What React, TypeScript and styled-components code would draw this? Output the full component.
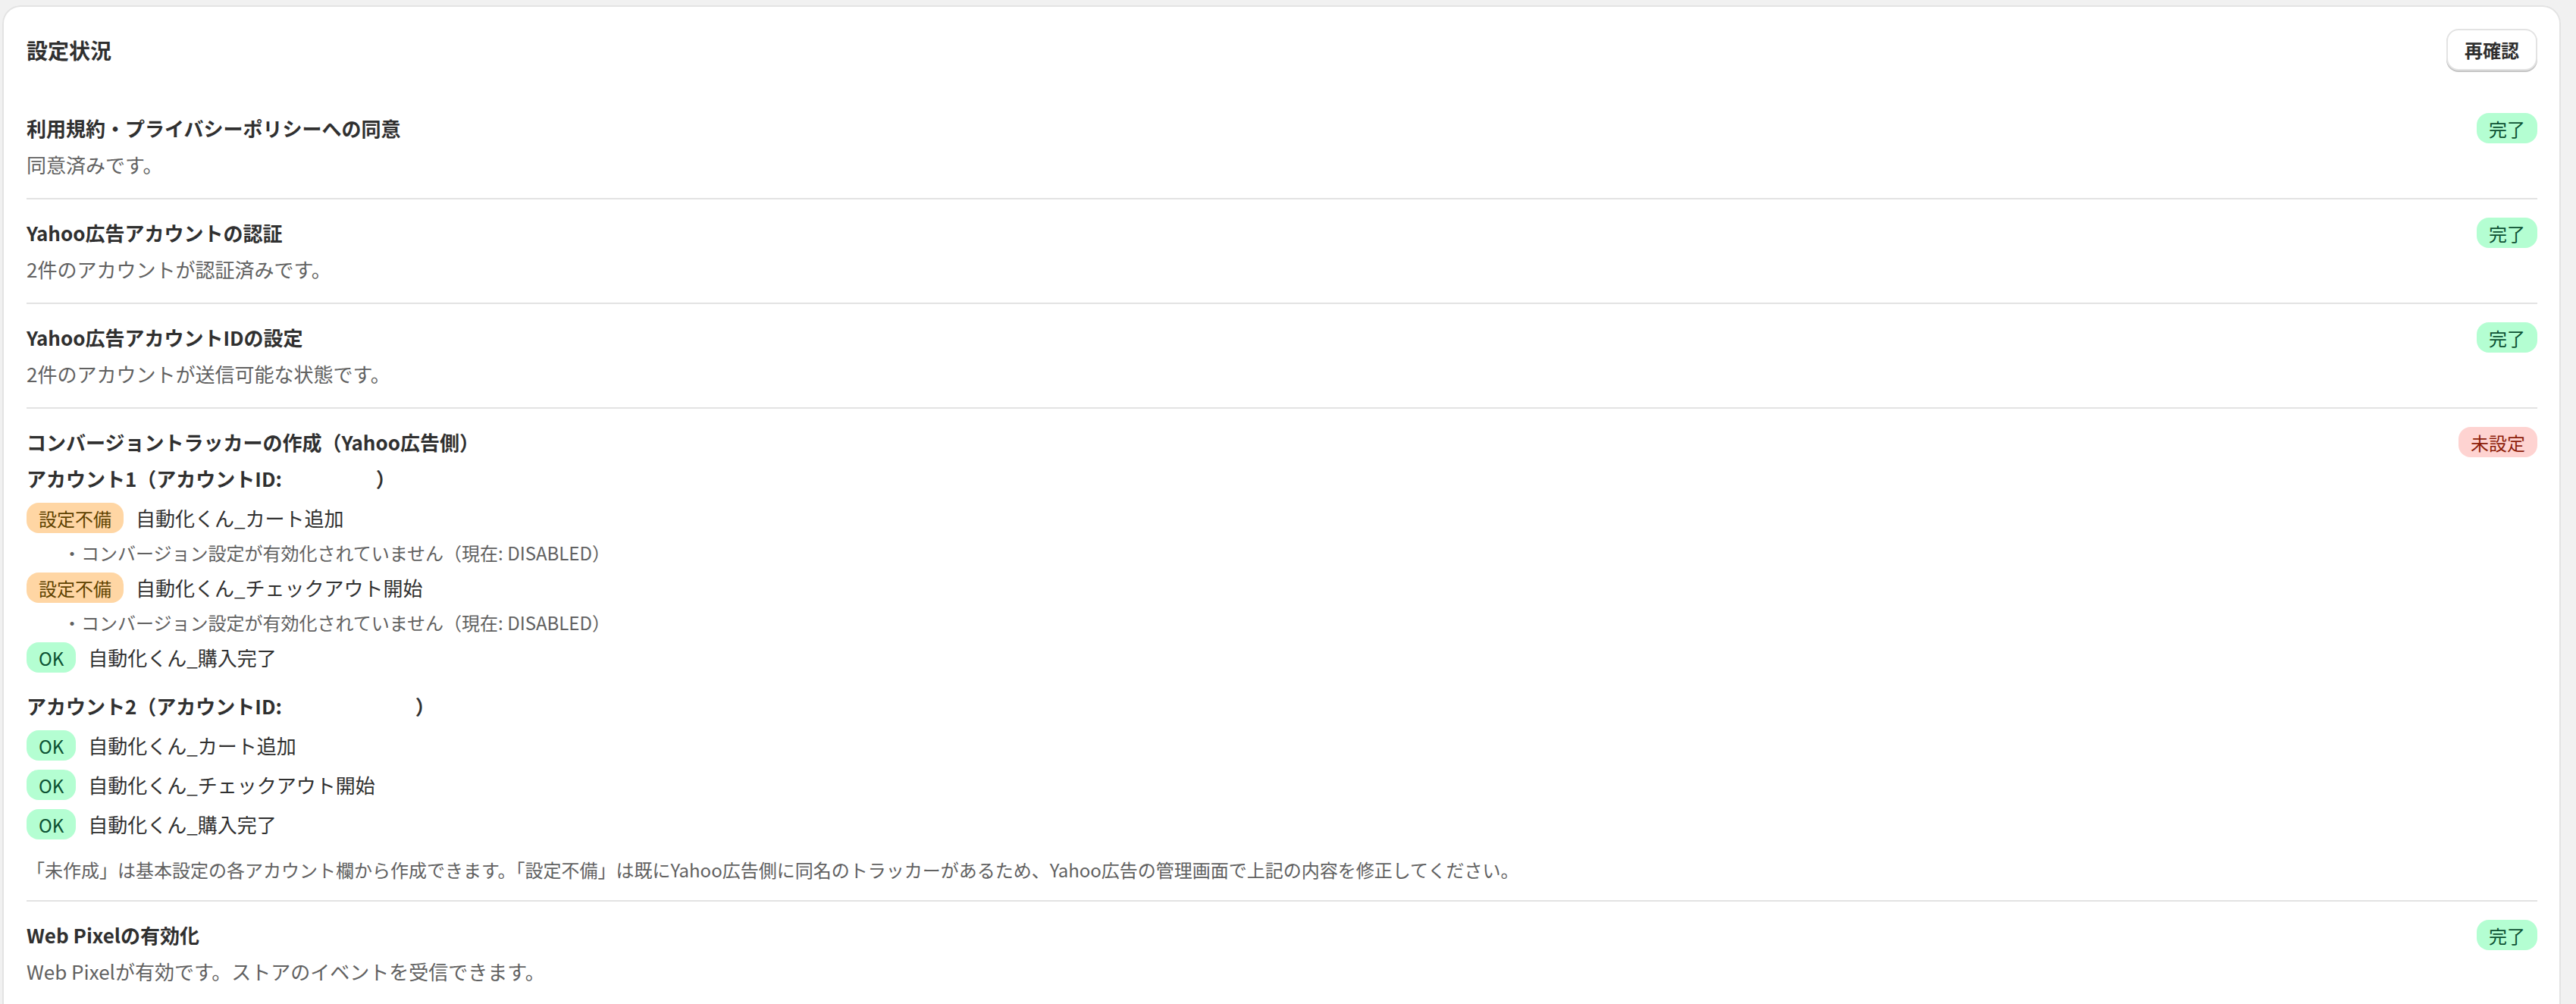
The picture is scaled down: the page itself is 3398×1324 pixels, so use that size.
import { Fragment } from "react";
import styled, { createGlobalStyle } from "styled-components";

const GlobalStyle = createGlobalStyle`
  html, body {
    margin: 0;
    padding: 0;
    background: #f1f1f1;
  }
  body {
    font-family: "Noto Sans CJK JP", "Noto Sans", sans-serif;
    color: #303030;
  }
`;

type Tone = "success" | "critical" | "warning";

const toneColors: Record<Tone, { bg: string; fg: string }> = {
  success: { bg: "#b4fed2", fg: "#0c5132" },
  critical: { bg: "#fed3d1", fg: "#8e1f0b" },
  warning: { bg: "#ffd6a4", fg: "#5e4200" },
};

const Page = styled.div`
  padding: 7px 20px 0 3px;
`;

const Card = styled.div`
  background: #ffffff;
  border-radius: 24px;
  box-shadow: inset 0 0 0 2px #e3e3e3, inset 0 -2px 0 0 #d4d4d4;
  padding: 31px 31px 32px 32px;
`;

const Header = styled.div`
  display: flex;
  justify-content: space-between;
  align-items: center;
  margin-bottom: 32px;
`;

const Title = styled.h2`
  margin: 0;
  font-size: 28px;
  line-height: 40px;
  font-weight: 700;
`;

const Button = styled.button`
  height: 55px;
  padding: 0 22px;
  border: 2px solid #e3e3e3;
  border-radius: 16px;
  background: #ffffff;
  box-shadow: 0 2px 0 0 #c4c4c4;
  font-family: inherit;
  font-size: 24px;
  font-weight: 700;
  color: #303030;
  cursor: pointer;
`;

const Section = styled.section`
  display: flex;
  flex-direction: column;
  gap: 8px;
  padding: 24px 0;
  border-bottom: 2px solid #e3e3e3;

  &:last-child {
    border-bottom: none;
  }
`;

const TopRow = styled.div`
  display: flex;
  justify-content: space-between;
  align-items: center;
`;

const Heading = styled.h3`
  margin: 0;
  font-size: 26px;
  line-height: 40px;
  font-weight: 700;
  color: #303030;
`;

const Description = styled.p`
  margin: 0;
  font-size: 26px;
  line-height: 40px;
  color: #616161;
`;

const Badge = styled.span<{ $tone: Tone }>`
  display: inline-flex;
  align-items: center;
  height: 40px;
  padding: 0 16px;
  border-radius: 16px;
  font-size: 24px;
  white-space: nowrap;
  background: ${({ $tone }) => toneColors[$tone].bg};
  color: ${({ $tone }) => toneColors[$tone].fg};
`;

const AccountList = styled.div`
  display: flex;
  flex-direction: column;
  gap: 24px;
`;

const Account = styled.div`
  display: flex;
  flex-direction: column;
  gap: 12px;
`;

// blank where the account ID is hidden in the screenshot
const Redacted = styled.span<{ $w: number }>`
  display: inline-block;
  width: ${({ $w }) => $w}px;
`;

const TrackerRow = styled.div`
  display: flex;
  align-items: center;
  gap: 16px;
`;

const TrackerName = styled.span`
  font-size: 26px;
  line-height: 40px;
  color: #303030;
`;

const Issue = styled.div`
  padding-left: 48px;
  font-size: 24px;
  line-height: 28px;
  color: #616161;
`;

const Footnote = styled.p`
  margin: 16px 0 0;
  font-size: 24px;
  line-height: 32px;
  color: #616161;
`;

type Tracker = { status: "ok" | "bad"; name: string; issue?: string };

const disabledIssue = "・コンバージョン設定が有効化されていません（現在: DISABLED）";

const accounts: { no: number; idWidth: number; trackers: Tracker[] }[] = [
  {
    no: 1,
    idWidth: 118,
    trackers: [
      { status: "bad", name: "自動化くん_カート追加", issue: disabledIssue },
      { status: "bad", name: "自動化くん_チェックアウト開始", issue: disabledIssue },
      { status: "ok", name: "自動化くん_購入完了" },
    ],
  },
  {
    no: 2,
    idWidth: 170,
    trackers: [
      { status: "ok", name: "自動化くん_カート追加" },
      { status: "ok", name: "自動化くん_チェックアウト開始" },
      { status: "ok", name: "自動化くん_購入完了" },
    ],
  },
];

function SimpleSection({ title, text }: { title: string; text: string }) {
  return (
    <Section>
      <TopRow>
        <Heading>{title}</Heading>
        <Badge $tone="success">完了</Badge>
      </TopRow>
      <Description>{text}</Description>
    </Section>
  );
}

export default function App() {
  return (
    <>
      <GlobalStyle />
      <Page>
        <Card>
          <Header>
            <Title>設定状況</Title>
            <Button>再確認</Button>
          </Header>

          <SimpleSection
            title="利用規約・プライバシーポリシーへの同意"
            text="同意済みです。"
          />
          <SimpleSection
            title="Yahoo広告アカウントの認証"
            text="2件のアカウントが認証済みです。"
          />
          <SimpleSection
            title="Yahoo広告アカウントIDの設定"
            text="2件のアカウントが送信可能な状態です。"
          />

          <Section>
            <TopRow>
              <Heading>コンバージョントラッカーの作成（Yahoo広告側）</Heading>
              <Badge $tone="critical">未設定</Badge>
            </TopRow>
            <AccountList>
              {accounts.map((acc) => (
                <Account key={acc.no}>
                  <Heading>
                    アカウント{acc.no}（アカウントID: <Redacted $w={acc.idWidth} />）
                  </Heading>
                  {acc.trackers.map((t) => (
                    <Fragment key={t.name}>
                      <TrackerRow>
                        <Badge $tone={t.status === "ok" ? "success" : "warning"}>
                          {t.status === "ok" ? "OK" : "設定不備"}
                        </Badge>
                        <TrackerName>{t.name}</TrackerName>
                      </TrackerRow>
                      {t.issue && <Issue>{t.issue}</Issue>}
                    </Fragment>
                  ))}
                </Account>
              ))}
            </AccountList>
            <Footnote>
              「未作成」は基本設定の各アカウント欄から作成できます。「設定不備」は既にYahoo広告側に同名のトラッカーがあるため、Yahoo広告の管理画面で上記の内容を修正してください。
            </Footnote>
          </Section>

          <SimpleSection
            title="Web Pixelの有効化"
            text="Web Pixelが有効です。ストアのイベントを受信できます。"
          />
        </Card>
      </Page>
    </>
  );
}
